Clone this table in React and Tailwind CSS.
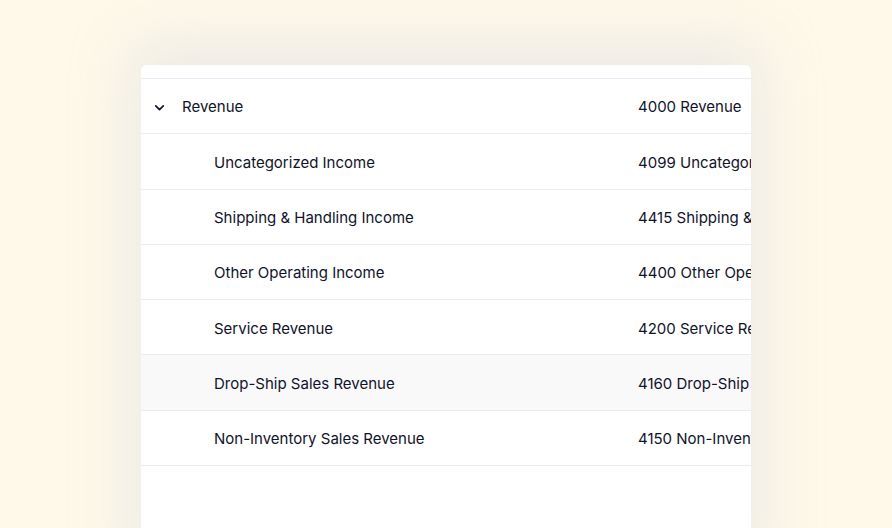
import React from "react";

const rows = [
    { name: "Uncategorized Income", account: "4099 Uncategorized Income" },
    { name: "Shipping & Handling Income", account: "4415 Shipping & Handling Income" },
    { name: "Other Operating Income", account: "4400 Other Operating Income" },
    { name: "Service Revenue", account: "4200 Service Revenue" },
    { name: "Drop-Ship Sales Revenue", account: "4160 Drop-Ship Sales Revenue", hover: true },
    { name: "Non-Inventory Sales Revenue", account: "4150 Non-Inventory Sales Revenue" },
];

const App = () => {
    return (
        <div
            className="w-[892px] h-[528px] overflow-hidden bg-[#fef9e9] pt-[65px] pl-[141px]"
            style={{ fontFamily: "Inter, 'Noto Sans', sans-serif" }}
        >
            <div className="w-[610px] h-[520px] bg-white rounded-t-md overflow-hidden shadow-[0_-12px_60px_12px_rgba(200,202,225,0.3)] text-[15px] text-[#10132a]">
                {/* header strip */}
                <div className="h-[14px] border-b border-[#ececf0]" />

                {/* parent row */}
                <div className="flex items-center h-[55.3px] pt-[3px] border-b border-[#ececf0]">
                    <div className="w-[41px] flex justify-end pr-[16px]">
                        <svg className="w-[13px] h-[13px]" viewBox="0 0 24 24" fill="none" stroke="#10132a" strokeWidth="3" strokeLinecap="round" strokeLinejoin="round">
                            <path d="M5 9l7 7 7-7" />
                        </svg>
                    </div>
                    <span className="w-[456px] shrink-0">Revenue</span>
                    <span className="whitespace-nowrap">4000 Revenue</span>
                </div>

                {rows.map((r) => (
                    <div
                        key={r.name}
                        className={`flex items-center h-[55.3px] pt-[3px] border-b border-[#ececf0] ${r.hover ? "bg-[#f9f9fa]" : ""}`}
                    >
                        <span className="w-[497px] pl-[73px] shrink-0 whitespace-nowrap">{r.name}</span>
                        <span className="whitespace-nowrap">{r.account}</span>
                    </div>
                ))}
            </div>
        </div>
    );
};

export default App;
